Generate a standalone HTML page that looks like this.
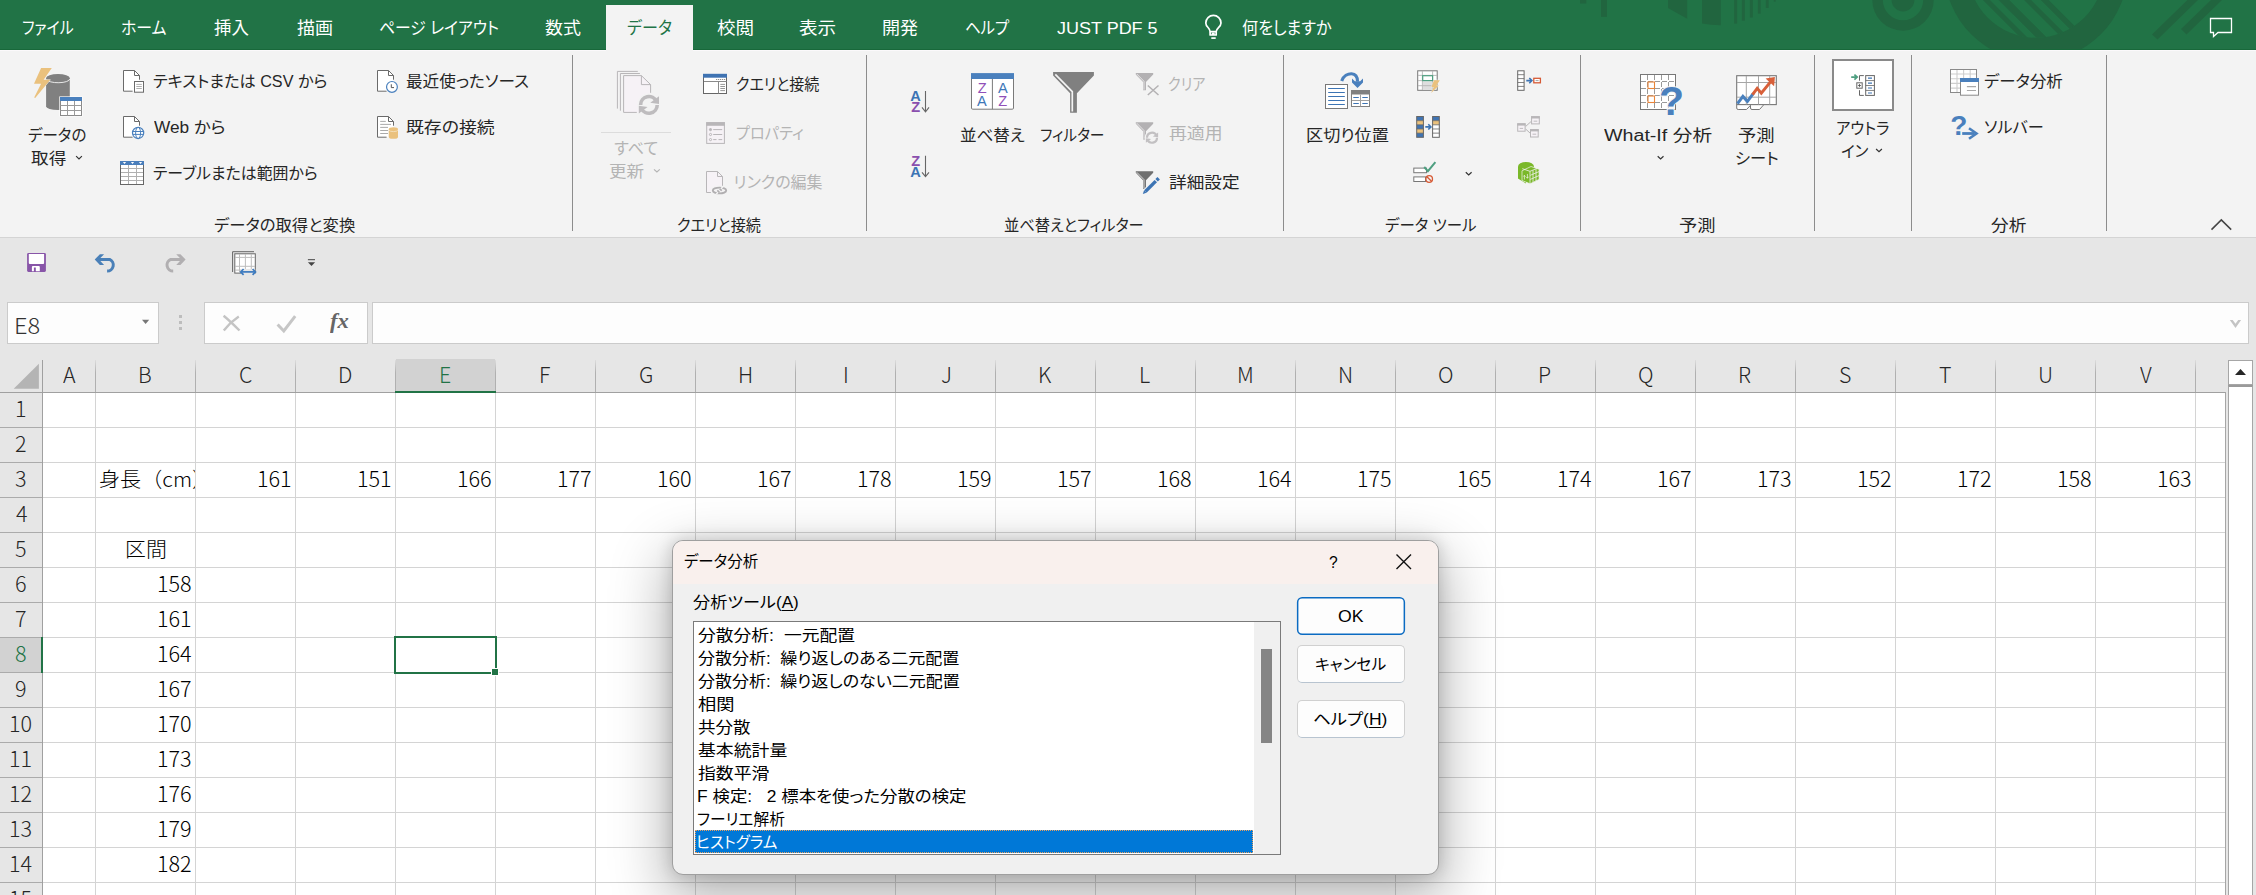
<!DOCTYPE html><html lang="ja"><head><meta charset="utf-8"><title>データ分析</title><style>

html,body{margin:0;padding:0}
body{width:2256px;height:895px;overflow:hidden;position:relative;background:#e6e6e6;font-family:"Liberation Sans","Noto Sans CJK JP",sans-serif}
.a{position:absolute}
.t{position:absolute;white-space:nowrap;line-height:30px;height:30px;transform-origin:0 50%}
.t.u{font-family:"Liberation Sans","Noto Sans CJK JP",sans-serif;font-feature-settings:"palt"}
.t.d{font-family:"Liberation Sans","Noto Sans CJK JP",sans-serif;font-feature-settings:"palt"}
.t.c{font-family:"Noto Sans CJK JP","Liberation Sans",sans-serif;font-weight:300}
.t.s{font-family:"Liberation Serif",serif;font-style:italic;font-weight:700}
.t u{text-decoration:underline;text-underline-offset:2px;text-decoration-thickness:1px}
svg{position:absolute;overflow:visible}

</style></head><body>
<div class="a" id="tabbar" style="left:0;top:0;width:2256px;height:50px;background:#217346;overflow:hidden">
<svg style="left:1560px;top:0" width="696" height="50" viewBox="1560 0 696 50"><g fill="#21653f">
<rect x="1580" y="0" width="6.300" height="3.500"/><rect x="1601" y="0" width="6" height="16.800"/>
<path d="M1668 0H1687.200V18.800L1668 8Z"/><path d="M1702 0H1720.800V25.200Q1711 25.200 1702 23.600Z"/>
<rect x="1734.200" y="0" width="2.900" height="23.600"/><rect x="1741.900" y="0" width="2.900" height="20.700"/><rect x="1749.900" y="0" width="2.900" height="17.500"/><rect x="1757.900" y="0" width="2.800" height="13.600"/><rect x="1765.800" y="0" width="2.900" height="8"/><rect x="1773.800" y="0" width="1.900" height="1.600"/>
<path fill-rule="evenodd" d="M1872.300 0a30.700 30.700 0 0 0 61.400 0ZM1882.800 0a20.200 20.200 0 0 0 40.400 0Z"/>
<path d="M1891.600 0a11.400 11.400 0 0 0 22.800 0Z"/>
<path fill-rule="evenodd" d="M1944.300 -30.500a91.700 91.700 0 0 0 183.400 0a91.700 91.700 0 0 0 -183.400 0ZM1967.800 -30.500a68.200 68.200 0 0 0 136.400 0a68.200 68.200 0 0 0 -136.400 0Z"/>
</g>
<clipPath id="cpr"><circle cx="2036" cy="-30.500" r="68.200"/></clipPath>
<g clip-path="url(#cpr)" fill="#21653f"><path d="M1982.900 0H1989.900L2049.900 60H2042.900ZM1998.700 0H2009.200L2069.200 60H2058.700ZM2024.100 0H2031.100L2091.100 60H2084.100ZM2040.800 0H2048.700L2108.700 60H2100.800Z"/></g>
<g fill="#21653f"><path d="M2187.400 0H2198L2157.500 39.500L2152 34.600ZM2211 0H2222L2186.500 34.500L2181 29Z"/></g>
<path d="M2210.500 18.500H2231.500V32.500H2218L2213.500 36.500V32.500H2210.500Z" fill="none" stroke="#fff" stroke-width="1.300"/>
</svg>
</div>
<div class="a" style="left:0px;top:50px;width:2256px;height:187px;background:#f3f3f3"></div>
<div class="a" style="left:0px;top:49px;width:2256px;height:1px;background:#18683a"></div>
<div class="a" style="left:0px;top:50px;width:2256px;height:1px;background:#fbf9fb"></div>
<div class="a" style="left:606px;top:5px;width:87px;height:46px;background:#f3f3f3"></div>
<div class="a" style="left:0px;top:237px;width:2256px;height:1px;background:#d4d4d4"></div>
<div class="a" style="left:572px;top:55px;width:1px;height:176px;background:#8c8c8c"></div>
<div class="a" style="left:866px;top:55px;width:1px;height:176px;background:#8c8c8c"></div>
<div class="a" style="left:1283px;top:55px;width:1px;height:176px;background:#8c8c8c"></div>
<div class="a" style="left:1580px;top:55px;width:1px;height:176px;background:#8c8c8c"></div>
<div class="a" style="left:1814px;top:55px;width:1px;height:176px;background:#8c8c8c"></div>
<div class="a" style="left:1911px;top:55px;width:1px;height:176px;background:#8c8c8c"></div>
<div class="a" style="left:2106px;top:55px;width:1px;height:176px;background:#8c8c8c"></div>
<div class="a" style="left:601px;top:132px;width:70px;height:1px;background:#dcdcdc"></div>
<div class="a" style="left:1832px;top:59px;width:62px;height:52px;background:#fff;border:2px solid #8a8a8a;box-sizing:border-box"></div>
<div class="a" style="left:7px;top:302px;width:152px;height:42px;background:#fdfdfd;border:1px solid #cbcbcb;box-sizing:border-box"></div>
<div class="a" style="left:204px;top:302px;width:164px;height:42px;background:#fdfdfd;border:1px solid #cbcbcb;box-sizing:border-box"></div>
<div class="a" style="left:372px;top:302px;width:1877px;height:42px;background:#fdfdfd;border:1px solid #cbcbcb;box-sizing:border-box"></div>
<div class="a" style="left:179px;top:315px;width:3px;height:3px;background:#bdbdbd"></div>
<div class="a" style="left:179px;top:321px;width:3px;height:3px;background:#bdbdbd"></div>
<div class="a" style="left:179px;top:327px;width:3px;height:3px;background:#bdbdbd"></div>
<div class="a" style="left:43px;top:393px;width:2183px;height:502px;background:#fff"></div>
<div class="a" style="left:396px;top:359px;width:99px;height:33px;background:#d2d2d2"></div>
<div class="a" style="left:0px;top:638px;width:42px;height:34px;background:#d2d2d2"></div>
<div class="a" style="left:95px;top:360px;width:1px;height:32px;background:linear-gradient(#dcdcdc,#b0b0b0 40%,#b0b0b0)"></div>
<div class="a" style="left:195px;top:360px;width:1px;height:32px;background:linear-gradient(#dcdcdc,#b0b0b0 40%,#b0b0b0)"></div>
<div class="a" style="left:295px;top:360px;width:1px;height:32px;background:linear-gradient(#dcdcdc,#b0b0b0 40%,#b0b0b0)"></div>
<div class="a" style="left:395px;top:360px;width:1px;height:32px;background:linear-gradient(#dcdcdc,#b0b0b0 40%,#b0b0b0)"></div>
<div class="a" style="left:495px;top:360px;width:1px;height:32px;background:linear-gradient(#dcdcdc,#b0b0b0 40%,#b0b0b0)"></div>
<div class="a" style="left:595px;top:360px;width:1px;height:32px;background:linear-gradient(#dcdcdc,#b0b0b0 40%,#b0b0b0)"></div>
<div class="a" style="left:695px;top:360px;width:1px;height:32px;background:linear-gradient(#dcdcdc,#b0b0b0 40%,#b0b0b0)"></div>
<div class="a" style="left:795px;top:360px;width:1px;height:32px;background:linear-gradient(#dcdcdc,#b0b0b0 40%,#b0b0b0)"></div>
<div class="a" style="left:895px;top:360px;width:1px;height:32px;background:linear-gradient(#dcdcdc,#b0b0b0 40%,#b0b0b0)"></div>
<div class="a" style="left:995px;top:360px;width:1px;height:32px;background:linear-gradient(#dcdcdc,#b0b0b0 40%,#b0b0b0)"></div>
<div class="a" style="left:1095px;top:360px;width:1px;height:32px;background:linear-gradient(#dcdcdc,#b0b0b0 40%,#b0b0b0)"></div>
<div class="a" style="left:1195px;top:360px;width:1px;height:32px;background:linear-gradient(#dcdcdc,#b0b0b0 40%,#b0b0b0)"></div>
<div class="a" style="left:1295px;top:360px;width:1px;height:32px;background:linear-gradient(#dcdcdc,#b0b0b0 40%,#b0b0b0)"></div>
<div class="a" style="left:1395px;top:360px;width:1px;height:32px;background:linear-gradient(#dcdcdc,#b0b0b0 40%,#b0b0b0)"></div>
<div class="a" style="left:1495px;top:360px;width:1px;height:32px;background:linear-gradient(#dcdcdc,#b0b0b0 40%,#b0b0b0)"></div>
<div class="a" style="left:1595px;top:360px;width:1px;height:32px;background:linear-gradient(#dcdcdc,#b0b0b0 40%,#b0b0b0)"></div>
<div class="a" style="left:1695px;top:360px;width:1px;height:32px;background:linear-gradient(#dcdcdc,#b0b0b0 40%,#b0b0b0)"></div>
<div class="a" style="left:1795px;top:360px;width:1px;height:32px;background:linear-gradient(#dcdcdc,#b0b0b0 40%,#b0b0b0)"></div>
<div class="a" style="left:1895px;top:360px;width:1px;height:32px;background:linear-gradient(#dcdcdc,#b0b0b0 40%,#b0b0b0)"></div>
<div class="a" style="left:1995px;top:360px;width:1px;height:32px;background:linear-gradient(#dcdcdc,#b0b0b0 40%,#b0b0b0)"></div>
<div class="a" style="left:2095px;top:360px;width:1px;height:32px;background:linear-gradient(#dcdcdc,#b0b0b0 40%,#b0b0b0)"></div>
<div class="a" style="left:2195px;top:360px;width:1px;height:32px;background:linear-gradient(#dcdcdc,#b0b0b0 40%,#b0b0b0)"></div>
<div class="a" style="left:95px;top:393px;width:1px;height:502px;background:#d4d4d4"></div>
<div class="a" style="left:195px;top:393px;width:1px;height:502px;background:#d4d4d4"></div>
<div class="a" style="left:295px;top:393px;width:1px;height:502px;background:#d4d4d4"></div>
<div class="a" style="left:395px;top:393px;width:1px;height:502px;background:#d4d4d4"></div>
<div class="a" style="left:495px;top:393px;width:1px;height:502px;background:#d4d4d4"></div>
<div class="a" style="left:595px;top:393px;width:1px;height:502px;background:#d4d4d4"></div>
<div class="a" style="left:695px;top:393px;width:1px;height:502px;background:#d4d4d4"></div>
<div class="a" style="left:795px;top:393px;width:1px;height:502px;background:#d4d4d4"></div>
<div class="a" style="left:895px;top:393px;width:1px;height:502px;background:#d4d4d4"></div>
<div class="a" style="left:995px;top:393px;width:1px;height:502px;background:#d4d4d4"></div>
<div class="a" style="left:1095px;top:393px;width:1px;height:502px;background:#d4d4d4"></div>
<div class="a" style="left:1195px;top:393px;width:1px;height:502px;background:#d4d4d4"></div>
<div class="a" style="left:1295px;top:393px;width:1px;height:502px;background:#d4d4d4"></div>
<div class="a" style="left:1395px;top:393px;width:1px;height:502px;background:#d4d4d4"></div>
<div class="a" style="left:1495px;top:393px;width:1px;height:502px;background:#d4d4d4"></div>
<div class="a" style="left:1595px;top:393px;width:1px;height:502px;background:#d4d4d4"></div>
<div class="a" style="left:1695px;top:393px;width:1px;height:502px;background:#d4d4d4"></div>
<div class="a" style="left:1795px;top:393px;width:1px;height:502px;background:#d4d4d4"></div>
<div class="a" style="left:1895px;top:393px;width:1px;height:502px;background:#d4d4d4"></div>
<div class="a" style="left:1995px;top:393px;width:1px;height:502px;background:#d4d4d4"></div>
<div class="a" style="left:2095px;top:393px;width:1px;height:502px;background:#d4d4d4"></div>
<div class="a" style="left:2195px;top:393px;width:1px;height:502px;background:#d4d4d4"></div>
<div class="a" style="left:43px;top:427px;width:2182px;height:1px;background:#d4d4d4"></div>
<div class="a" style="left:0px;top:427px;width:42px;height:1px;background:#ababab"></div>
<div class="a" style="left:43px;top:462px;width:2182px;height:1px;background:#d4d4d4"></div>
<div class="a" style="left:0px;top:462px;width:42px;height:1px;background:#ababab"></div>
<div class="a" style="left:43px;top:497px;width:2182px;height:1px;background:#d4d4d4"></div>
<div class="a" style="left:0px;top:497px;width:42px;height:1px;background:#ababab"></div>
<div class="a" style="left:43px;top:532px;width:2182px;height:1px;background:#d4d4d4"></div>
<div class="a" style="left:0px;top:532px;width:42px;height:1px;background:#ababab"></div>
<div class="a" style="left:43px;top:567px;width:2182px;height:1px;background:#d4d4d4"></div>
<div class="a" style="left:0px;top:567px;width:42px;height:1px;background:#ababab"></div>
<div class="a" style="left:43px;top:602px;width:2182px;height:1px;background:#d4d4d4"></div>
<div class="a" style="left:0px;top:602px;width:42px;height:1px;background:#ababab"></div>
<div class="a" style="left:43px;top:637px;width:2182px;height:1px;background:#d4d4d4"></div>
<div class="a" style="left:0px;top:637px;width:42px;height:1px;background:#ababab"></div>
<div class="a" style="left:43px;top:672px;width:2182px;height:1px;background:#d4d4d4"></div>
<div class="a" style="left:0px;top:672px;width:42px;height:1px;background:#ababab"></div>
<div class="a" style="left:43px;top:707px;width:2182px;height:1px;background:#d4d4d4"></div>
<div class="a" style="left:0px;top:707px;width:42px;height:1px;background:#ababab"></div>
<div class="a" style="left:43px;top:742px;width:2182px;height:1px;background:#d4d4d4"></div>
<div class="a" style="left:0px;top:742px;width:42px;height:1px;background:#ababab"></div>
<div class="a" style="left:43px;top:777px;width:2182px;height:1px;background:#d4d4d4"></div>
<div class="a" style="left:0px;top:777px;width:42px;height:1px;background:#ababab"></div>
<div class="a" style="left:43px;top:812px;width:2182px;height:1px;background:#d4d4d4"></div>
<div class="a" style="left:0px;top:812px;width:42px;height:1px;background:#ababab"></div>
<div class="a" style="left:43px;top:847px;width:2182px;height:1px;background:#d4d4d4"></div>
<div class="a" style="left:0px;top:847px;width:42px;height:1px;background:#ababab"></div>
<div class="a" style="left:43px;top:882px;width:2182px;height:1px;background:#d4d4d4"></div>
<div class="a" style="left:0px;top:882px;width:42px;height:1px;background:#ababab"></div>
<div class="a" style="left:0px;top:392px;width:2226px;height:1px;background:#a0a0a0"></div>
<div class="a" style="left:42px;top:360px;width:1px;height:535px;background:#a0a0a0"></div>
<div class="a" style="left:2225px;top:392px;width:1px;height:503px;background:#a6a6a6"></div>
<svg style="left:12px;top:362px" width="28" height="28" viewBox="12 362 28 28"><path d="M38.900 363.700V388.700H13.700Z" fill="#b4b4b4"/></svg>
<div class="a" style="left:395px;top:391px;width:101px;height:2px;background:#217346"></div>
<div class="a" style="left:41px;top:637px;width:2px;height:36px;background:#217346"></div>
<div class="a" style="left:394px;top:636px;width:103px;height:38px;border:2px solid #217346;box-sizing:border-box"></div>
<div class="a" style="left:491px;top:668px;width:8px;height:8px;background:#fff"></div>
<div class="a" style="left:492px;top:669px;width:6px;height:6px;background:#217346"></div>
<div class="a" style="left:2228px;top:360px;width:25px;height:25px;background:#fff;border:1px solid #a6a6a6;box-sizing:border-box"></div>
<div class="a" style="left:2228px;top:385px;width:25px;height:520px;background:#fff;border:1px solid #a6a6a6;border-top:2px solid #9a9a9a;box-sizing:border-box"></div>
<svg style="left:2234px;top:368px" width="14" height="8" viewBox="0 0 14 8"><path d="M1 7L6.500 1L12 7Z" fill="#262626"/></svg>
<div class="a" id="dlg" style="left:672px;top:540px;width:767px;height:335px;box-sizing:border-box;border:1px solid #9f9f9f;border-radius:11px;background:#f0f0f0;overflow:hidden;box-shadow:0 20px 56px 6px rgba(0,0,0,.29),0 0 16px 1px rgba(0,0,0,.15)">
<div class="a" style="left:0;top:0;width:767px;height:43px;background:#f9f0ed"></div>
</div>
<div class="a" style="left:693px;top:621px;width:588px;height:234px;background:#fff;border:1px solid #7a7a7a;box-sizing:border-box"></div>
<div class="a" style="left:1254px;top:622px;width:26px;height:232px;background:#f0f0f0"></div>
<div class="a" style="left:1261px;top:649px;width:11px;height:94px;background:#858585"></div>
<div class="a" style="left:695px;top:830px;width:558px;height:23px;background:#0078d7;outline:1px dotted #e8a060;outline-offset:-1px"></div>
<svg style="left:1295px;top:595px" width="112" height="42" viewBox="1295 595 112 42"><rect x="1297.650" y="597.650" width="106.700" height="36.700" rx="4.500" fill="#fdfdfd" stroke="#0b6bc2" stroke-width="1.500"/></svg>
<div class="a" style="left:1297px;top:645px;width:108px;height:38px;background:#fdfdfd;border:1px solid #d0d0d0;border-bottom-color:#b8c4d0;border-radius:5px;box-sizing:border-box"></div>
<div class="a" style="left:1297px;top:700px;width:108px;height:38px;background:#fdfdfd;border:1px solid #d0d0d0;border-bottom-color:#b8c4d0;border-radius:5px;box-sizing:border-box"></div>
<svg style="left:1396px;top:554px" width="16" height="16" viewBox="0 0 16 16"><path d="M0.500 0.500L15 15M15 0.500L0.500 15" stroke="#111" stroke-width="1.400" fill="none"/></svg>
<svg style="left:1200px;top:12px" width="28" height="30" viewBox="1200 12 28 30"><g fill="none" stroke="#fff" stroke-width="1.7" stroke-linejoin="round">
<path d="M1210.1 31.6C1210.1 28 1205.8 27 1205.8 22.9A7.6 7.6 0 0 1 1221 22.9C1221 27 1216.200 28 1216.200 31.600Z"/>
<path d="M1210.1 31.6V35H1216.200V31.6M1211.700 33.300H1214.700"/><path d="M1211.300 38.100H1215.700"/></g></svg>
<svg style="left:30px;top:64px" width="58" height="56" viewBox="30 64 58 56"><path d="M46.1 78V106.200A11.850 3.900 0 0 0 69.800 106.200V78Z" fill="#808080"/>
<ellipse cx="57.950" cy="78" rx="11.850" ry="3.900" fill="#808080"/>
<path d="M46.600 79.500A11.600 3.700 0 0 0 69.700 79" fill="none" stroke="#f3f3f3" stroke-width=".9"/>
<polygon points="41.100,68 51.800,68 43.600,79.800 50.300,79.800 35.200,97.900 34.200,97.500 41.100,83.800 34,83.800" fill="#eac17d" stroke="#f3f3f3" stroke-width=".8" paint-order="stroke"/>
<rect x="59.300" y="96.400" width="23.400" height="20.100" fill="#fdfdfd"/>
<rect x="60.500" y="97.500" width="21" height="18" fill="#fff" stroke="#8a8a8a" stroke-width="1"/>
<rect x="60" y="97" width="22" height="4" fill="#4a80bd"/>
<path d="M67.500 101V115.500M74.500 101V115.500M60.500 105.500H81.500M60.500 110.500H81.500" stroke="#9a9a9a" stroke-width="1" fill="none"/></svg>
<svg style="left:120px;top:66px" width="28" height="30" viewBox="120 66 28 30"><g transform="translate(0 0)" fill="#fff" stroke="#6a6a6a" stroke-width="1"><path d="M123.500 70.500H134.500L139.500 75.500V91.200H123.500Z" stroke="none"/><path d="M132.600 91.200H123.500V70.500H134.500L139.500 75.500V79.700" fill="none"/><path d="M134.500 70.500V75.500H139.500" fill="none"/></g><rect x="134.500" y="81.500" width="9" height="10.700" fill="#fff" stroke="#6a6a6a"/>
<path d="M136.300 84.400H141.800M136.300 86.500H141.800M136.300 88.500H141.800" stroke="#a6a6a6" stroke-width=".9"/></svg>
<svg style="left:120px;top:112px" width="28" height="30" viewBox="120 112 28 30"><g transform="translate(0 46)" fill="#fff" stroke="#6a6a6a" stroke-width="1"><path d="M123.500 70.500H134.500L139.500 75.500V91.200H123.500Z" stroke="none"/><path d="M132.600 91.200H123.500V70.500H134.500L139.500 75.500V79.700" fill="none"/><path d="M134.500 70.500V75.500H139.500" fill="none"/></g><circle cx="138.100" cy="132.950" r="5.600" fill="#fff" stroke="#4a80bd" stroke-width="1.200"/>
<ellipse cx="138.100" cy="132.950" rx="2.500" ry="5.600" fill="none" stroke="#4a80bd" stroke-width="1"/>
<path d="M132.900 131.500H143.300M132.900 134.400H143.300" stroke="#4a80bd" stroke-width="1" fill="none"/></svg>
<svg style="left:118px;top:159px" width="28" height="28" viewBox="118 159 28 28"><rect x="120.500" y="161.500" width="23" height="23" fill="#fff" stroke="#666" stroke-width="1"/>
<path d="M128.500 165V184M136.500 165V184M121 168.500H143M121 172.500H143M121 176.500H143M121 180.500H143" stroke="#b0b0b0" stroke-width="1" fill="none"/>
<rect x="120" y="161" width="24" height="4" fill="#4a7ebb"/>
<path d="M122.900 162.100H126.100L124.500 164.100ZM130.900 162.100H134.100L132.500 164.100ZM138.900 162.100H142.100L140.500 164.100Z" fill="#fff"/></svg>
<svg style="left:374px;top:66px" width="28" height="30" viewBox="374 66 28 30"><g transform="translate(254 0)" fill="#fff" stroke="#6a6a6a" stroke-width="1"><path d="M123.500 70.500H134.500L139.500 75.500V91.200H123.500Z" stroke="none"/><path d="M132.600 91.200H123.500V70.500H134.500L139.500 75.500V79.700" fill="none"/><path d="M134.500 70.500V75.500H139.500" fill="none"/></g><circle cx="391.950" cy="86.900" r="5.400" fill="#fff" stroke="#4a80bd" stroke-width="1.200"/>
<path d="M391.300 84.300V87.600H394" fill="none" stroke="#555" stroke-width="1"/></svg>
<svg style="left:374px;top:112px" width="28" height="30" viewBox="374 112 28 30"><g transform="translate(254 46)" fill="#fff" stroke="#6a6a6a" stroke-width="1"><path d="M123.500 70.500H134.500L139.500 75.500V91.200H123.500Z" stroke="none"/><path d="M132.600 91.200H123.500V70.500H134.500L139.500 75.500V79.700" fill="none"/><path d="M134.500 70.500V75.500H139.500" fill="none"/></g><path d="M380.200 121.400H385.800M380.200 124.400H391M380.200 127.400H388M380.200 130.500H388M380.200 133.500H388" stroke="#a0a0a0" stroke-width=".9" fill="none"/>
<path d="M388.800 129.200V136.900A4.600 1.900 0 0 0 398 136.900V129.200Z" fill="#eac17d" stroke="#f3f3f3" stroke-width=".8" paint-order="stroke"/>
<ellipse cx="393.400" cy="129.200" rx="4.600" ry="1.900" fill="#eac17d"/>
<path d="M389 130.100A4.500 1.800 0 0 0 397.900 130" fill="none" stroke="#f6e6c8" stroke-width=".8"/></svg>
<svg style="left:612px;top:66px" width="54" height="54" viewBox="612 66 54 54"><g fill="none" stroke="#b8b6b8" stroke-width="1">
<path d="M617.400 108.600V71.400H637.800"/><path d="M620.400 110.700V73.500H639.900"/></g>
<path d="M623.600 75.600H641.400L650.600 84.600V112.400H623.600Z" fill="#f6f2f6"/>
<path d="M636.800 112.400H623.600V75.600H641.400L650.600 84.600V92.800M641.400 75.600V84.600H650.600" fill="none" stroke="#b8b6b8" stroke-width="1"/>
<circle cx="648.900" cy="104.900" r="11.500" fill="#f3f3f3"/><g fill="none" stroke="#bebcbe" stroke-width="3.6"><path d="M640.6 104.9A8.3 8.3 0 0 1 656.42 101.39"/><path d="M657.2 104.9A8.3 8.3 0 0 1 641.38 108.41"/></g><path d="M659 96.35L659 104.07L650.25 102.78Z" fill="#bebcbe"/><path d="M638.8 113.45L638.8 105.73L647.55 107.02Z" fill="#bebcbe"/></svg>
<svg style="left:700px;top:70px" width="30" height="28" viewBox="700 70 30 28"><rect x="703.500" y="74.500" width="23" height="19" fill="#fff" stroke="#666" stroke-width="1"/>
<rect x="703" y="73.800" width="24" height="3.900" fill="#3f73b2"/>
<path d="M704 81.500H726.500M718.500 81.500V93.500" stroke="#8a8a8a" stroke-width="1" fill="none"/>
<path d="M716.200 79.500H725.200" stroke="#777" stroke-width="1" stroke-dasharray="1 1" fill="none"/>
<path d="M720.300 84.400H725M720.300 86.500H725M720.300 88.500H725M720.300 90.600H725" stroke="#8a8a8a" stroke-width=".9" fill="none"/></svg>
<svg style="left:702px;top:118px" width="28" height="30" viewBox="702 118 28 30"><rect x="706.700" y="122.700" width="17.700" height="20.700" fill="#f6f2f6" stroke="#b8b6b8" stroke-width="1"/>
<rect x="706.200" y="122.200" width="18.700" height="3.600" fill="#b8b6b8"/>
<g fill="none" stroke="#b8b6b8" stroke-width="1"><circle cx="710.500" cy="129.600" r="1.100" fill="#b8b6b8"/><circle cx="710.500" cy="134.500" r="1.100"/><circle cx="710.500" cy="139.600" r="1.100"/>
<path d="M713.200 129.600H722.200M713.200 134.500H722.200M713.200 139.600H716.500M718.500 139.600H722.200"/></g></svg>
<svg style="left:702px;top:167px" width="30" height="30" viewBox="702 167 30 30"><path d="M706.500 171.500H717.500L722.500 176.500V192.500H706.500Z" fill="#f6f2f6"/>
<path d="M710.900 192.500H706.500V171.500H717.500L722.500 176.500V185.800M717.500 171.500V176.500H722.500" fill="none" stroke="#b8b6b8" stroke-width="1"/>
<ellipse cx="719.500" cy="190.500" rx="6.700" ry="2.900" fill="none" stroke="#f3f3f3" stroke-width="3.800"/>
<ellipse cx="719.500" cy="190.500" rx="6.700" ry="2.900" fill="none" stroke="#b0aeb0" stroke-width="1.900"/>
<path d="M716.200 194.300L722.800 186.700" stroke="#f3f3f3" stroke-width="1.500" fill="none"/>
<path d="M717.300 190.400L719.500 192.500M719.700 188.800L721.800 190.700" stroke="#b0aeb0" stroke-width="1.700" fill="none"/></svg>
<svg style="left:906px;top:86px" width="28" height="30" viewBox="906 86 28 30"><g font-family="Liberation Sans,sans-serif" font-weight="700" font-size="14.600px" text-anchor="middle"><text x="915.600" y="100.7" fill="#3c74b4">A</text><text x="915.600" y="111.9" fill="#8a4fae">Z</text></g><path d="M925.500 90.9V111.6M922 107.4L925.500 111.8L929 107.4" fill="none" stroke="#666" stroke-width="1.100"/></svg>
<svg style="left:906px;top:151px" width="28" height="30" viewBox="906 151 28 30"><g font-family="Liberation Sans,sans-serif" font-weight="700" font-size="14.600px" text-anchor="middle"><text x="915.600" y="165.6" fill="#8a4fae">Z</text><text x="915.600" y="176.8" fill="#3c74b4">A</text></g><path d="M925.500 155.8V176.5M922 172.3L925.500 176.7L929 172.3" fill="none" stroke="#666" stroke-width="1.100"/></svg>
<svg style="left:968px;top:70px" width="50" height="44" viewBox="968 70 50 44"><path d="M971.500 76V108A1.200 1.200 0 0 0 972.700 109.200H1012.300A1.200 1.200 0 0 0 1013.500 108V76Z" fill="#fff" stroke="#7a7a7a" stroke-width="1"/>
<rect x="971" y="73.100" width="43" height="5.900" fill="#4a80bd"/>
<path d="M992.400 79V109.200" stroke="#7a7a7a" stroke-width="1"/>
<g font-family="Liberation Sans,sans-serif" font-size="14.600px" text-anchor="middle">
<text x="982.100" y="92.700" fill="#9050b8">Z</text><text x="981.900" y="105.800" fill="#3f78b8">A</text>
<text x="1002.800" y="92.700" fill="#3f78b8">A</text><text x="1002.700" y="105.800" fill="#9050b8">Z</text></g></svg>
<svg style="left:1050px;top:69px" width="48" height="48" viewBox="1050 69 48 48"><path d="M1053.1 72.1H1093.9V75.6L1076.9 93.2V112.8H1070.1V93.2L1053.1 75.6Z" fill="#808080"/><path d="M1055.3 74.3L1072.3 91.6V111.4" fill="none" stroke="#f3f3f3" stroke-width="1.68"/></svg>
<svg style="left:1132px;top:70px" width="30" height="28" viewBox="1132 70 30 28"><path d="M1135.8 73H1153.2V74.49L1145.95 82V90.36H1143.05V82L1135.8 74.49Z" fill="#b3b1b3"/><path d="M1136.74 73.94L1143.99 81.32V89.76" fill="none" stroke="#f3f3f3" stroke-width="0.8"/><path d="M1147.800 85.500L1158.500 95M1158.500 85.500L1147.800 95" stroke="#b3b1b3" stroke-width="1.500" fill="none"/></svg>
<svg style="left:1132px;top:119px" width="30" height="28" viewBox="1132 119 30 28"><path d="M1135.8 122.2H1153.2V123.69L1145.95 131.2V139.56H1143.05V131.2L1135.8 123.69Z" fill="#b3b1b3"/><path d="M1136.74 123.14L1143.99 130.52V138.96" fill="none" stroke="#f3f3f3" stroke-width="0.8"/><circle cx="1152" cy="137.700" r="7.300" fill="#f3f3f3"/><g fill="none" stroke="#c2c0c2" stroke-width="2.2"><path d="M1147 137.7A5 5 0 0 1 1156.53 135.59"/><path d="M1157 137.7A5 5 0 0 1 1147.47 139.81"/></g><path d="M1158.1 132.55L1158.1 137.2L1152.83 136.42Z" fill="#c2c0c2"/><path d="M1145.9 142.85L1145.9 138.2L1151.17 138.97Z" fill="#c2c0c2"/></svg>
<svg style="left:1132px;top:168px" width="30" height="28" viewBox="1132 168 30 28"><path d="M1135.8 171.3H1153.2V172.79L1145.95 180.3V188.66H1143.05V180.3L1135.8 172.79Z" fill="#6f6f6f"/><path d="M1136.74 172.24L1143.99 179.62V188.06" fill="none" stroke="#f3f3f3" stroke-width="0.8"/><path d="M1158.600 178.300L1144.600 192.200" stroke="#f3f3f3" stroke-width="5.500" fill="none"/><path d="M1158.700 178.200L1156.600 180.300" stroke="#3c74b4" stroke-width="3.400" fill="none"/><path d="M1155.800 181.100L1145.400 191.500" stroke="#3c74b4" stroke-width="3.400" fill="none"/><path d="M1144.100 190.300L1146.500 192.700L1142.800 193.900Z" fill="#3c74b4"/></svg>
<svg style="left:1322px;top:68px" width="52" height="44" viewBox="1322 68 52 44"><rect x="1325.500" y="84.500" width="22" height="24" fill="#fff" stroke="#777" stroke-width="1"/>
<path d="M1328.200 88.500H1344.800M1328.200 92.500H1344.800M1328.200 96.500H1344.800M1328.200 100.500H1344.800M1328.200 104.500H1344.800" stroke="#3c74b4" stroke-width="1" fill="none"/>
<rect x="1351.500" y="90.500" width="18" height="16" fill="#fff" stroke="#808080" stroke-width="1"/>
<rect x="1351" y="90" width="19" height="4.500" fill="#808080"/>
<path d="M1360.500 94.500V106.400M1352 100.500H1369.400" stroke="#a0a0a0" stroke-width="1" fill="none"/>
<path d="M1353.300 97.500H1358.800M1362.300 97.500H1367.800M1353.300 103.500H1358.800M1362.300 103.500H1367.800" stroke="#3c74b4" stroke-width="1.100" fill="none"/>
<path d="M1341.700 80.900C1343.500 75.800 1348 73.600 1351.500 73.700C1355.500 73.900 1357.500 77 1357.500 81.500" fill="none" stroke="#4a80bd" stroke-width="3.100"/>
<path d="M1352 78.600L1354.800 81.200H1360.200L1363 78.600V82.600L1357.500 88.100L1352 82.600Z" fill="#4a80bd"/></svg>
<svg style="left:1414px;top:67px" width="30" height="28" viewBox="1414 67 30 28"><rect x="1417.700" y="70.800" width="19.500" height="19.500" fill="#fff" stroke="#777" stroke-width="1"/>
<rect x="1422.900" y="81.500" width="9.700" height="8.300" fill="#dedede"/>
<path d="M1422.400 71V90M1432.600 71V90M1418 75.400H1437M1418 80.600H1437M1418 85.700H1437" stroke="#b5b5b5" stroke-width=".9" fill="none"/>
<rect x="1422.700" y="75.700" width="9.900" height="4.900" fill="#fff" stroke="#4e9f80" stroke-width="1.200"/>
<path d="M1434 80.200H1439.800L1436.400 85.500H1438.800L1431.200 92.900L1433.600 87H1431.400Z" fill="#eac17d" stroke="#f3f3f3" stroke-width=".7" paint-order="stroke"/></svg>
<svg style="left:1412px;top:112px" width="32" height="30" viewBox="1412 112 32 30"><rect x="1416.7" y="116.5" width="6.7" height="4.16" fill="#3f73b2"/><rect x="1416.7" y="120.66" width="6.7" height="4.16" fill="#eac17d"/><rect x="1416.7" y="124.82" width="6.7" height="4.16" fill="#3f73b2"/><rect x="1416.7" y="128.98" width="6.7" height="4.16" fill="#eac17d"/><rect x="1416.7" y="133.14" width="6.7" height="4.16" fill="#3f73b2"/><rect x="1416.7" y="116.5" width="6.7" height="20.8" fill="none" stroke="#666" stroke-width="1"/><path d="M1416.7 120.66H1423.4" stroke="#666" stroke-width=".8"/><path d="M1416.7 124.82H1423.4" stroke="#666" stroke-width=".8"/><path d="M1416.7 128.98H1423.4" stroke="#666" stroke-width=".8"/><path d="M1416.7 133.14H1423.4" stroke="#666" stroke-width=".8"/><rect x="1432.6" y="116.5" width="6.7" height="4.16" fill="#3f73b2"/><rect x="1432.6" y="120.66" width="6.7" height="4.16" fill="#eac17d"/><rect x="1432.6" y="124.82" width="6.7" height="4.16" fill="#fff"/><rect x="1432.6" y="128.98" width="6.7" height="4.16" fill="#fff"/><rect x="1432.6" y="133.14" width="6.7" height="4.16" fill="#fff"/><rect x="1432.6" y="116.5" width="6.7" height="20.8" fill="none" stroke="#666" stroke-width="1"/><path d="M1432.6 120.66H1439.3" stroke="#666" stroke-width=".8"/><path d="M1432.6 124.82H1439.3" stroke="#666" stroke-width=".8"/><path d="M1432.6 128.98H1439.3" stroke="#666" stroke-width=".8"/><path d="M1432.6 133.14H1439.3" stroke="#666" stroke-width=".8"/><path d="M1425.3 126.9H1430.5M1428.3 124.3L1430.9 126.9L1428.3 129.5" fill="none" stroke="#3c74b4" stroke-width="1.6"/></svg>
<svg style="left:1410px;top:158px" width="30" height="28" viewBox="1410 158 30 28"><rect x="1413.800" y="168.100" width="12.700" height="4.600" fill="#fff" stroke="#777" stroke-width="1"/>
<rect x="1413.800" y="176.900" width="11.700" height="4.600" fill="#fff" stroke="#777" stroke-width="1"/>
<path d="M1424.200 167L1427.900 171.200L1435.400 162.100" fill="none" stroke="#4e9f80" stroke-width="2"/>
<circle cx="1429.200" cy="179" r="3.300" fill="#f3f3f3" stroke="#d65a35" stroke-width="1.300"/><path d="M1426.900 176.700L1431.500 181.300" stroke="#d65a35" stroke-width="1.300"/></svg>
<svg style="left:1514px;top:67px" width="30" height="28" viewBox="1514 67 30 28"><rect x="1517.7" y="70.8" width="6.4" height="3.9" fill="#fff"/><rect x="1517.7" y="74.7" width="6.4" height="3.9" fill="#fff"/><rect x="1517.7" y="78.6" width="6.4" height="3.9" fill="#fff"/><rect x="1517.7" y="82.5" width="6.4" height="3.9" fill="#fff"/><rect x="1517.7" y="86.4" width="6.4" height="3.9" fill="#fff"/><rect x="1517.7" y="70.8" width="6.4" height="19.5" fill="none" stroke="#666" stroke-width="1"/><path d="M1517.7 74.7H1524.1" stroke="#666" stroke-width=".8"/><path d="M1517.7 78.6H1524.1" stroke="#666" stroke-width=".8"/><path d="M1517.7 82.5H1524.1" stroke="#666" stroke-width=".8"/><path d="M1517.7 86.4H1524.1" stroke="#666" stroke-width=".8"/><path d="M1526.3 80.6H1531.5M1529.3 78L1531.9 80.6L1529.3 83.2" fill="none" stroke="#3c74b4" stroke-width="1.6"/><rect x="1533.800" y="78.300" width="6.600" height="4.500" fill="#fff" stroke="#d65a35" stroke-width="1.300"/><path d="M1535.600 80.600H1538.600" stroke="#999" stroke-width=".9"/></svg>
<svg style="left:1514px;top:113px" width="30" height="28" viewBox="1514 113 30 28"><path d="M1525.600 126.500L1531.100 121.500M1525.600 129L1530 133" stroke="#b8b6b8" stroke-width="1" fill="none"/><rect x="1517.7" y="123.8" width="7.4" height="7.4" fill="#f6f2f6" stroke="#b8b6b8" stroke-width="1"/><rect x="1517.2" y="123.3" width="8.4" height="2.300" fill="#b8b6b8"/><path d="M1519.7 128.39H1523.1" stroke="#b8b6b8" stroke-width=".9"/><rect x="1531.6" y="116.7" width="7.7" height="7.2" fill="#f6f2f6" stroke="#b8b6b8" stroke-width="1"/><rect x="1531.1" y="116.2" width="8.7" height="2.300" fill="#b8b6b8"/><path d="M1533.6 121.16H1537.3" stroke="#b8b6b8" stroke-width=".9"/><rect x="1530.5" y="129.6" width="7.7" height="7.4" fill="#f6f2f6" stroke="#b8b6b8" stroke-width="1"/><rect x="1530" y="129.1" width="8.7" height="2.300" fill="#b8b6b8"/><path d="M1532.5 134.19H1536.2" stroke="#b8b6b8" stroke-width=".9"/></svg>
<svg style="left:1514px;top:158px" width="30" height="30" viewBox="1514 158 30 30"><path d="M1518 166.500A8 4.600 0 0 1 1534 166.500V171L1518 178.500Z" fill="#7ab829"/>
<path d="M1518 167V178.500L1526 183.600V171Z" fill="#7ab829"/>
<path d="M1522 170.800L1531 166.500L1539.100 169.300V179.400L1530 183.800L1522 180.500Z" fill="#7ab829" stroke="#f3f3f3" stroke-width=".7"/>
<path d="M1530 171.300V183.500M1530 171.300L1522.300 168.700M1530 171.300L1539 167.600" stroke="#f3f3f3" stroke-width=".8" fill="none"/>
<path d="M1533 170.300V182.300M1536 169.200V181M1530.300 175.300L1539 171.600M1530.300 179.400L1539 175.600" stroke="#f3f3f3" stroke-width=".8" fill="none"/>
<path d="M1524.400 175.500V179.500M1527.400 174V178M1523.400 176.500L1524.400 175.300L1525.400 176.800M1526.400 177L1527.400 178.300L1528.400 176.800" stroke="#f3f3f3" stroke-width=".7" fill="none"/></svg>
<svg style="left:1636px;top:70px" width="50" height="48" viewBox="1636 70 50 48"><rect x="1640.500" y="74.500" width="35" height="35" fill="#fff" stroke="#777" stroke-width="1"/>
<path d="M1647.500 75V109M1654.500 75V109M1661.500 75V109M1668.500 75V109M1641 81.500H1675.500M1641 88.500H1675.500M1641 95.500H1675.500M1641 102.500H1675.500" stroke="#9a9a9a" stroke-width="1" fill="none" stroke-dasharray="5 2"/>
<rect x="1648" y="82" width="6.500" height="6.500" fill="#fff" stroke="#e8853a" stroke-width="1.100"/>
<rect x="1648" y="96" width="6.500" height="6.500" fill="#fff" stroke="#e8853a" stroke-width="1.100"/>
<text x="1671.500" y="114.800" font-family="Liberation Sans,sans-serif" font-weight="700" font-size="41px" text-anchor="middle" fill="#4a80bd" stroke="#f3f3f3" stroke-width="2" paint-order="stroke">?</text></svg>
<svg style="left:1733px;top:72px" width="48" height="40" viewBox="1733 72 48 40"><path d="M1736.700 104.700V108A1.500 1.500 0 0 0 1738.200 109.500H1746.500L1750.500 105.300V108A1.500 1.500 0 0 0 1752 109.500H1759.500L1763.800 104.700" fill="#fff" stroke="#777" stroke-width="1"/>
<rect x="1736.700" y="75.700" width="39.600" height="28.900" fill="#fff" stroke="#777" stroke-width="1.100"/>
<path d="M1746.300 76V104.500M1758.500 76V104.500M1769.700 76V104.500M1737 82.500H1776M1737 97.200H1776" stroke="#a6a6a6" stroke-width="1" fill="none"/>
<path d="M1737.500 103.600L1742.900 96.400L1747.400 101.300L1753.400 93.400" fill="none" stroke="#4a80bd" stroke-width="3"/>
<path d="M1752.500 94.600L1757.200 88.300L1761.300 93.100L1771.500 80.600" fill="none" stroke="#d8603a" stroke-width="3"/>
<path d="M1765.600 78.400L1774.900 76.900L1774.100 86.300Z" fill="#d8603a"/></svg>
<svg style="left:1848px;top:72px" width="30" height="26" viewBox="1848 72 30 26"><rect x="1865.7" y="75.6" width="8.7" height="4.95" fill="#fff"/><rect x="1865.7" y="80.55" width="8.7" height="4.95" fill="#fff"/><rect x="1865.7" y="85.5" width="8.7" height="4.95" fill="#fff"/><rect x="1865.7" y="90.45" width="8.7" height="4.95" fill="#fff"/><rect x="1865.7" y="75.6" width="8.7" height="19.8" fill="none" stroke="#666" stroke-width="1"/><path d="M1865.7 80.55H1874.4" stroke="#666" stroke-width=".8"/><path d="M1865.7 85.5H1874.4" stroke="#666" stroke-width=".8"/><path d="M1865.7 90.45H1874.4" stroke="#666" stroke-width=".8"/><path d="M1868 78.100H1872M1868 83.100H1872M1868 88H1872M1868 93H1872" stroke="#3c74b4" stroke-width="1.100" fill="none"/>
<path d="M1863.800 75.600H1859.500V80.700M1859.500 90.200V95.400H1863.800" fill="none" stroke="#666" stroke-width="1"/>
<rect x="1856.800" y="82.800" width="5.400" height="5.400" fill="#fff" stroke="#666" stroke-width="1"/><path d="M1858.200 85.500H1860.800M1859.500 84.200V86.800" stroke="#555" stroke-width="1"/>
<path d="M1851.200 77.100H1856.600M1854.400 74.600L1857.200 77.100L1854.400 79.600" fill="none" stroke="#4e9f80" stroke-width="1.700"/></svg>
<svg style="left:1947px;top:66px" width="36" height="32" viewBox="1947 66 36 32"><rect x="1950.500" y="69.500" width="26" height="23" fill="#fff" stroke="#8a8a8a" stroke-width="1"/>
<path d="M1957 70V92M1963.600 70V92M1970.200 70V92M1951 74H1976M1951 78.700H1976M1951 83.400H1976M1951 88.100H1976" stroke="#cfcfcf" stroke-width="1.100" fill="none"/>
<rect x="1960.500" y="78.500" width="18" height="16.700" fill="#fff" stroke="#8a8a8a" stroke-width="1"/>
<rect x="1960" y="78" width="19" height="4" fill="#4a80bd"/>
<path d="M1966.900 86.600H1976M1966.900 90.500H1976" stroke="#a8a8a8" stroke-width="1.100" fill="none"/></svg>
<svg style="left:1947px;top:110px" width="36" height="32" viewBox="1947 110 36 32"><text x="1958.700" y="134.500" font-family="Liberation Sans,sans-serif" font-weight="700" font-size="28px" text-anchor="middle" fill="#4a80bd">?</text>
<path d="M1962.200 133.500H1974" stroke="#4a80bd" stroke-width="2.800" fill="none"/><path d="M1969 128.300L1976.500 133.500L1969 138.800" fill="none" stroke="#4a80bd" stroke-width="2.600" stroke-linejoin="miter"/></svg>
<svg style="left:74px;top:152px" width="12" height="10" viewBox="74 152 12 10"><path d="M76.1 156.15L79 158.85L81.9 156.15" fill="none" stroke="#333" stroke-width="1.200"/></svg>
<svg style="left:651px;top:166px" width="12" height="10" viewBox="651 166 12 10"><path d="M654 169.35L656.9 172.05L659.8 169.35" fill="none" stroke="#b4b4b4" stroke-width="1.200"/></svg>
<svg style="left:1463px;top:169px" width="12" height="10" viewBox="1463 169 12 10"><path d="M1465.8 172.25L1468.7 174.95L1471.6 172.25" fill="none" stroke="#333" stroke-width="1.200"/></svg>
<svg style="left:1655px;top:153px" width="12" height="10" viewBox="1655 153 12 10"><path d="M1657.7 156.25L1660.6 158.95L1663.5 156.25" fill="none" stroke="#333" stroke-width="1.200"/></svg>
<svg style="left:1873px;top:146px" width="12" height="10" viewBox="1873 146 12 10"><path d="M1876.1 148.95L1879 151.65L1881.9 148.95" fill="none" stroke="#333" stroke-width="1.200"/></svg>
<svg style="left:2208px;top:216px" width="28" height="18" viewBox="2208 216 28 18"><path d="M2211.500 229.600L2221.300 219.900L2231.200 229.600" fill="none" stroke="#444" stroke-width="1.500"/></svg>
<svg style="left:24px;top:250px" width="26" height="26" viewBox="24 250 26 26"><rect x="27.100" y="252.900" width="18.800" height="19" rx="1.300" fill="#8855a8"/>
<path d="M28.800 253.900H44.100V262.900A1 1 0 0 1 43.100 263.900H29.800A1 1 0 0 1 28.800 262.900Z" fill="#fff"/>
<path d="M31.900 271.200V267.100A1 1 0 0 1 32.900 266.100H38.800A1 1 0 0 1 39.800 267.100V271.200H35.800V267.400H33.900V271.200Z" fill="#fff"/></svg>
<svg style="left:92px;top:250px" width="28" height="26" viewBox="92 250 28 26"><g><path d="M94.700 259.400L99.900 254.200H104.100L98.900 259.400L104.100 264.900H99.900Z" fill="#4a80b8"/>
<path d="M98 259.400H109.600A6.100 6.100 0 0 1 107.100 271.100" fill="none" stroke="#4a80b8" stroke-width="3"/></g></svg>
<svg style="left:161px;top:250px" width="28" height="26" viewBox="161 250 28 26"><g transform="translate(280.3 0) scale(-1 1)"><path d="M94.700 259.400L99.900 254.200H104.100L98.900 259.400L104.100 264.900H99.900Z" fill="#b1afb1"/>
<path d="M98 259.400H109.600A6.100 6.100 0 0 1 107.100 271.100" fill="none" stroke="#b1afb1" stroke-width="3"/></g></svg>
<svg style="left:229px;top:248px" width="30" height="30" viewBox="229 248 30 30"><path d="M232.600 272V251.700H254" fill="none" stroke="#666" stroke-width="1"/>
<rect x="234.800" y="253.800" width="20.500" height="19.300" fill="#fff" stroke="#666" stroke-width="1"/>
<path d="M239.500 254V273M245.400 254V273M251.300 254V273M235 257.400H255M235 266.300H255M235 270.100H255" stroke="#bdbdbd" stroke-width="1" fill="none"/>
<path d="M241 271.900H255.200" stroke="#e6e6e6" stroke-width="6" fill="none"/>
<path d="M241.500 271.900H254.700" stroke="#3c7abf" stroke-width="1.700" fill="none"/><path d="M243.600 269L240.700 271.900L243.600 274.800M252.600 269L255.500 271.900L252.600 274.800" fill="none" stroke="#3c7abf" stroke-width="1.700"/></svg>
<svg style="left:305px;top:256px" width="14" height="12" viewBox="305 256 14 12"><path d="M307.900 259.700H315" stroke="#444" stroke-width="1"/><path d="M307.900 262.200H315.100L311.500 266Z" fill="#444"/></svg>
<svg style="left:140px;top:317px" width="12" height="10" viewBox="140 317 12 10"><path d="M142 319.800H149.200L145.600 323.900Z" fill="#777"/></svg>
<svg style="left:220px;top:312px" width="24" height="22" viewBox="220 312 24 22"><path d="M223.600 315.700C229 320 234 325 239.500 330.500M238.800 316.500C232 321 228 325 223.800 330.400" fill="none" stroke="#c4c4c4" stroke-width="2.400"/></svg>
<svg style="left:274px;top:312px" width="24" height="22" viewBox="274 312 24 22"><path d="M277.600 324.500L283.800 331L295.200 316.200" fill="none" stroke="#c6c6c6" stroke-width="3"/></svg>
<svg style="left:2227px;top:317px" width="16" height="14" viewBox="2227 317 16 14"><path d="M2229.800 320.100H2232.700L2235.500 323.800L2238.200 320.100H2241.100L2235.500 328Z" fill="#c4c4c4"/></svg>
<span class="t u" style="left:22.12px;top:13.60px;font-size:17px;color:#ffffff;transform:scaleX(0.8772);">ファイル</span>
<span class="t u" style="left:121.06px;top:13.60px;font-size:17px;color:#ffffff;transform:scaleX(0.9362);">ホーム</span>
<span class="t u" style="left:214.00px;top:13.60px;font-size:17px;color:#ffffff;transform:scaleX(1.0294);">挿入</span>
<span class="t u" style="left:297.00px;top:13.60px;font-size:17px;color:#ffffff;transform:scaleX(1.0606);">描画</span>
<span class="t u" style="left:379.07px;top:13.60px;font-size:17px;color:#ffffff;transform:scaleX(0.9291);">ページ レイアウト</span>
<span class="t u" style="left:545.00px;top:13.60px;font-size:17px;color:#ffffff;transform:scaleX(1.0588);">数式</span>
<span class="t u" style="left:627.05px;top:13.60px;font-size:17px;color:#217346;transform:scaleX(0.9457);">データ</span>
<span class="t u" style="left:717.00px;top:13.60px;font-size:17px;color:#ffffff;transform:scaleX(1.0909);">校閲</span>
<span class="t u" style="left:798.91px;top:13.60px;font-size:17px;color:#ffffff;transform:scaleX(1.0938);">表示</span>
<span class="t u" style="left:882.44px;top:13.60px;font-size:17px;color:#ffffff;transform:scaleX(1.0606);">開発</span>
<span class="t u" style="left:965.09px;top:13.60px;font-size:17px;color:#ffffff;transform:scaleX(0.9062);">ヘルプ</span>
<span class="t u" style="left:1056.50px;top:13.60px;font-size:17px;color:#ffffff;transform:scaleX(1.0579);">JUST PDF 5</span>
<span class="t u" style="left:1241.55px;top:13.60px;font-size:17px;color:#ffffff;transform:scaleX(0.9462);">何をしますか</span>
<span class="t u" style="left:28.03px;top:120.80px;font-size:16px;color:#262626;transform:scaleX(0.9707);">データの</span>
<span class="t u" style="left:31.30px;top:143.80px;font-size:16px;color:#262626;transform:scaleX(1.1031);">取得</span>
<span class="t u" style="left:153.00px;top:66.60px;font-size:16px;color:#262626;transform:scaleX(1.0093);">テキストまたは CSV から</span>
<span class="t u" style="left:154.00px;top:112.60px;font-size:16px;color:#262626;transform:scaleX(1.0769);">Web から</span>
<span class="t u" style="left:153.00px;top:158.60px;font-size:16px;color:#262626;transform:scaleX(0.9939);">テーブルまたは範囲から</span>
<span class="t u" style="left:405.96px;top:66.60px;font-size:16px;color:#262626;transform:scaleX(1.0368);">最近使ったソース</span>
<span class="t u" style="left:405.88px;top:112.60px;font-size:16px;color:#262626;transform:scaleX(1.1154);">既存の接続</span>
<span class="t u" style="left:213.98px;top:210.80px;font-size:16px;color:#262626;transform:scaleX(1.0219);">データの取得と変換</span>
<span class="t u" style="left:614.49px;top:134.00px;font-size:16px;color:#b4b4b4;transform:scaleX(1.0119);">すべて</span>
<span class="t u" style="left:608.90px;top:156.90px;font-size:16px;color:#b4b4b4;transform:scaleX(1.0968);">更新</span>
<span class="t u" style="left:735.56px;top:69.60px;font-size:16px;color:#262626;transform:scaleX(0.9375);">クエリと接続</span>
<span class="t u" style="left:735.55px;top:118.60px;font-size:16px;color:#b4b4b4;transform:scaleX(0.9493);">プロパティ</span>
<span class="t u" style="left:733.50px;top:168.00px;font-size:16px;color:#b4b4b4;">リンクの編集</span>
<span class="t u" style="left:676.56px;top:210.80px;font-size:16px;color:#262626;transform:scaleX(0.9432);">クエリと接続</span>
<span class="t u" style="left:959.97px;top:121.30px;font-size:16px;color:#262626;transform:scaleX(1.0323);">並べ替え</span>
<span class="t u" style="left:1039.58px;top:121.30px;font-size:16px;color:#262626;transform:scaleX(0.9191);">フィルター</span>
<span class="t u" style="left:1167.62px;top:69.70px;font-size:16px;color:#b4b4b4;transform:scaleX(0.8805);">クリア</span>
<span class="t u" style="left:1168.50px;top:118.70px;font-size:16px;color:#b4b4b4;transform:scaleX(1.1170);">再適用</span>
<span class="t u" style="left:1168.50px;top:168.00px;font-size:16px;color:#262626;transform:scaleX(1.1016);">詳細設定</span>
<span class="t u" style="left:1003.65px;top:210.80px;font-size:16px;color:#262626;transform:scaleX(0.9503);">並べ替えとフィルター</span>
<span class="t u" style="left:1305.93px;top:120.90px;font-size:16px;color:#262626;transform:scaleX(1.0724);">区切り位置</span>
<span class="t u" style="left:1385.03px;top:210.80px;font-size:16px;color:#262626;transform:scaleX(0.9677);">データ ツール</span>
<span class="t u" style="left:1604.00px;top:120.80px;font-size:16px;color:#262626;transform:scaleX(1.2273);">What-If 分析</span>
<span class="t u" style="left:1738.45px;top:120.80px;font-size:16px;color:#262626;transform:scaleX(1.1467);">予測</span>
<span class="t u" style="left:1734.98px;top:143.50px;font-size:16px;color:#262626;transform:scaleX(1.0195);">シート</span>
<span class="t u" style="left:1678.56px;top:210.80px;font-size:16px;color:#262626;transform:scaleX(1.1433);">予測</span>
<span class="t u" style="left:1836.44px;top:113.80px;font-size:16px;color:#262626;transform:scaleX(0.9630);">アウトラ</span>
<span class="t u" style="left:1840.53px;top:137.20px;font-size:16px;color:#262626;transform:scaleX(0.9667);">イン</span>
<span class="t u" style="left:1983.97px;top:66.70px;font-size:16px;color:#262626;transform:scaleX(1.0263);">データ分析</span>
<span class="t u" style="left:1983.99px;top:112.80px;font-size:16px;color:#262626;transform:scaleX(1.0105);">ソルバー</span>
<span class="t u" style="left:1990.60px;top:210.80px;font-size:16px;color:#262626;transform:scaleX(1.1031);">分析</span>
<span class="t c" style="left:13.55px;top:308.65px;font-size:22px;color:#333;transform:scaleX(1.0727);">E8</span>
<span class="t s" style="left:330.00px;top:306.10px;font-size:22px;color:#666;transform:scaleX(1.0222);">fx</span>
<span class="t c" style="left:62.70px;top:357.90px;font-size:22px;color:#262626;transform:scaleX(0.9700);">A</span>
<span class="t c" style="left:138.22px;top:357.90px;font-size:22px;color:#262626;transform:scaleX(0.9700);">B</span>
<span class="t c" style="left:238.71px;top:357.90px;font-size:22px;color:#262626;transform:scaleX(0.9700);">C</span>
<span class="t c" style="left:337.74px;top:357.90px;font-size:22px;color:#262626;transform:scaleX(0.9700);">D</span>
<span class="t c" style="left:438.71px;top:357.90px;font-size:22px;color:#217346;transform:scaleX(0.9700);">E</span>
<span class="t c" style="left:538.71px;top:357.90px;font-size:22px;color:#262626;transform:scaleX(0.9700);">F</span>
<span class="t c" style="left:638.71px;top:357.90px;font-size:22px;color:#262626;transform:scaleX(0.9700);">G</span>
<span class="t c" style="left:737.74px;top:357.90px;font-size:22px;color:#262626;transform:scaleX(0.9700);">H</span>
<span class="t c" style="left:842.59px;top:357.90px;font-size:22px;color:#262626;transform:scaleX(0.9700);">I</span>
<span class="t c" style="left:940.65px;top:357.90px;font-size:22px;color:#262626;transform:scaleX(0.9700);">J</span>
<span class="t c" style="left:1037.74px;top:357.90px;font-size:22px;color:#262626;transform:scaleX(0.9700);">K</span>
<span class="t c" style="left:1139.19px;top:357.90px;font-size:22px;color:#262626;transform:scaleX(0.9700);">L</span>
<span class="t c" style="left:1237.26px;top:357.90px;font-size:22px;color:#262626;transform:scaleX(0.9700);">M</span>
<span class="t c" style="left:1337.74px;top:357.90px;font-size:22px;color:#262626;transform:scaleX(0.9700);">N</span>
<span class="t c" style="left:1437.74px;top:357.90px;font-size:22px;color:#262626;transform:scaleX(0.9700);">O</span>
<span class="t c" style="left:1538.22px;top:357.90px;font-size:22px;color:#262626;transform:scaleX(0.9700);">P</span>
<span class="t c" style="left:1637.74px;top:357.90px;font-size:22px;color:#262626;transform:scaleX(0.9700);">Q</span>
<span class="t c" style="left:1738.22px;top:357.90px;font-size:22px;color:#262626;transform:scaleX(0.9700);">R</span>
<span class="t c" style="left:1839.19px;top:357.90px;font-size:22px;color:#262626;transform:scaleX(0.9700);">S</span>
<span class="t c" style="left:1939.19px;top:357.90px;font-size:22px;color:#262626;transform:scaleX(0.9700);">T</span>
<span class="t c" style="left:2037.74px;top:357.90px;font-size:22px;color:#262626;transform:scaleX(0.9700);">U</span>
<span class="t c" style="left:2139.68px;top:357.90px;font-size:22px;color:#262626;transform:scaleX(0.9700);">V</span>
<span class="t c" style="left:14.63px;top:392.30px;font-size:22px;color:#262626;transform:scaleX(0.9800);">1</span>
<span class="t c" style="left:15.12px;top:427.30px;font-size:22px;color:#262626;transform:scaleX(0.9800);">2</span>
<span class="t c" style="left:15.12px;top:462.30px;font-size:22px;color:#262626;transform:scaleX(0.9800);">3</span>
<span class="t c" style="left:15.61px;top:497.30px;font-size:22px;color:#262626;transform:scaleX(0.9800);">4</span>
<span class="t c" style="left:15.12px;top:532.30px;font-size:22px;color:#262626;transform:scaleX(0.9800);">5</span>
<span class="t c" style="left:15.12px;top:567.30px;font-size:22px;color:#262626;transform:scaleX(0.9800);">6</span>
<span class="t c" style="left:15.12px;top:602.30px;font-size:22px;color:#262626;transform:scaleX(0.9800);">7</span>
<span class="t c" style="left:15.12px;top:637.30px;font-size:22px;color:#217346;transform:scaleX(0.9800);">8</span>
<span class="t c" style="left:15.12px;top:672.30px;font-size:22px;color:#262626;transform:scaleX(0.9800);">9</span>
<span class="t c" style="left:8.75px;top:707.30px;font-size:22px;color:#262626;transform:scaleX(0.9800);">10</span>
<span class="t c" style="left:9.24px;top:742.30px;font-size:22px;color:#262626;transform:scaleX(0.9800);">11</span>
<span class="t c" style="left:8.75px;top:777.30px;font-size:22px;color:#262626;transform:scaleX(0.9800);">12</span>
<span class="t c" style="left:8.75px;top:812.30px;font-size:22px;color:#262626;transform:scaleX(0.9800);">13</span>
<span class="t c" style="left:8.75px;top:847.30px;font-size:22px;color:#262626;transform:scaleX(0.9800);">14</span>
<span class="t c" style="left:8.75px;top:882.30px;font-size:22px;color:#262626;transform:scaleX(0.9800);">15</span>
<span class="t c" style="left:256.69px;top:461.90px;font-size:22px;color:#000;transform:scaleX(0.9800);">161</span>
<span class="t c" style="left:356.69px;top:461.90px;font-size:22px;color:#000;transform:scaleX(0.9800);">151</span>
<span class="t c" style="left:456.69px;top:461.90px;font-size:22px;color:#000;transform:scaleX(0.9800);">166</span>
<span class="t c" style="left:556.69px;top:461.90px;font-size:22px;color:#000;transform:scaleX(0.9800);">177</span>
<span class="t c" style="left:656.69px;top:461.90px;font-size:22px;color:#000;transform:scaleX(0.9800);">160</span>
<span class="t c" style="left:756.69px;top:461.90px;font-size:22px;color:#000;transform:scaleX(0.9800);">167</span>
<span class="t c" style="left:856.69px;top:461.90px;font-size:22px;color:#000;transform:scaleX(0.9800);">178</span>
<span class="t c" style="left:956.69px;top:461.90px;font-size:22px;color:#000;transform:scaleX(0.9800);">159</span>
<span class="t c" style="left:1056.69px;top:461.90px;font-size:22px;color:#000;transform:scaleX(0.9800);">157</span>
<span class="t c" style="left:1156.69px;top:461.90px;font-size:22px;color:#000;transform:scaleX(0.9800);">168</span>
<span class="t c" style="left:1256.69px;top:461.90px;font-size:22px;color:#000;transform:scaleX(0.9800);">164</span>
<span class="t c" style="left:1356.69px;top:461.90px;font-size:22px;color:#000;transform:scaleX(0.9800);">175</span>
<span class="t c" style="left:1456.69px;top:461.90px;font-size:22px;color:#000;transform:scaleX(0.9800);">165</span>
<span class="t c" style="left:1556.69px;top:461.90px;font-size:22px;color:#000;transform:scaleX(0.9800);">174</span>
<span class="t c" style="left:1656.69px;top:461.90px;font-size:22px;color:#000;transform:scaleX(0.9800);">167</span>
<span class="t c" style="left:1756.69px;top:461.90px;font-size:22px;color:#000;transform:scaleX(0.9800);">173</span>
<span class="t c" style="left:1856.69px;top:461.90px;font-size:22px;color:#000;transform:scaleX(0.9800);">152</span>
<span class="t c" style="left:1956.69px;top:461.90px;font-size:22px;color:#000;transform:scaleX(0.9800);">172</span>
<span class="t c" style="left:2056.69px;top:461.90px;font-size:22px;color:#000;transform:scaleX(0.9800);">158</span>
<span class="t c" style="left:2156.69px;top:461.90px;font-size:22px;color:#000;transform:scaleX(0.9800);">163</span>
<span class="t c" style="left:124.66px;top:532.80px;font-size:20.5px;color:#000;transform:scaleX(1.0211);">区間</span>
<div class="a" style="left:96px;top:462.70px;width:99px;height:30px;overflow:hidden"><span class="t c" style="left:3.47px;top:0;font-size:20.5px;color:#000;transform:scaleX(1.0300);">身長（cm）</span></div>
<span class="t c" style="left:156.69px;top:567.00px;font-size:22px;color:#000;transform:scaleX(0.9800);">158</span>
<span class="t c" style="left:156.69px;top:602.00px;font-size:22px;color:#000;transform:scaleX(0.9800);">161</span>
<span class="t c" style="left:156.69px;top:637.00px;font-size:22px;color:#000;transform:scaleX(0.9800);">164</span>
<span class="t c" style="left:156.69px;top:672.00px;font-size:22px;color:#000;transform:scaleX(0.9800);">167</span>
<span class="t c" style="left:156.69px;top:707.00px;font-size:22px;color:#000;transform:scaleX(0.9800);">170</span>
<span class="t c" style="left:156.69px;top:742.00px;font-size:22px;color:#000;transform:scaleX(0.9800);">173</span>
<span class="t c" style="left:156.69px;top:777.00px;font-size:22px;color:#000;transform:scaleX(0.9800);">176</span>
<span class="t c" style="left:156.69px;top:812.00px;font-size:22px;color:#000;transform:scaleX(0.9800);">179</span>
<span class="t c" style="left:156.69px;top:847.00px;font-size:22px;color:#000;transform:scaleX(0.9800);">182</span>
<span class="t d" style="left:684.00px;top:546.50px;font-size:15.6px;color:#000;transform:scaleX(0.9907);">データ分析</span>
<span class="t d" style="left:693.40px;top:588.10px;font-size:15.6px;color:#000;transform:scaleX(1.0990);">分析ツール(<u>A</u>)</span>
<span class="t d" style="left:698.40px;top:621.10px;font-size:15.6px;color:#000;transform:scaleX(1.1399);">分散分析:&nbsp; 一元配置</span>
<span class="t d" style="left:698.40px;top:644.10px;font-size:15.6px;color:#000;transform:scaleX(1.0921);">分散分析:&nbsp; 繰り返しのある二元配置</span>
<span class="t d" style="left:698.40px;top:667.10px;font-size:15.6px;color:#000;transform:scaleX(1.0900);">分散分析:&nbsp; 繰り返しのない二元配置</span>
<span class="t d" style="left:698.40px;top:690.10px;font-size:15.6px;color:#000;transform:scaleX(1.1700);">相関</span>
<span class="t d" style="left:698.40px;top:713.10px;font-size:15.6px;color:#000;transform:scaleX(1.1191);">共分散</span>
<span class="t d" style="left:698.40px;top:736.10px;font-size:15.6px;color:#000;transform:scaleX(1.1462);">基本統計量</span>
<span class="t d" style="left:698.40px;top:759.10px;font-size:15.6px;color:#000;transform:scaleX(1.1452);">指数平滑</span>
<span class="t d" style="left:697.28px;top:782.10px;font-size:15.6px;color:#000;transform:scaleX(1.1171);">F 検定:&nbsp;&nbsp; 2 標本を使った分散の検定</span>
<span class="t d" style="left:697.39px;top:805.10px;font-size:15.6px;color:#000;transform:scaleX(1.0070);">フーリエ解析</span>
<span class="t d" style="left:696.41px;top:828.10px;font-size:15.6px;color:#fff;transform:scaleX(0.9949);">ヒストグラム</span>
<span class="t d" style="left:1338.00px;top:602.00px;font-size:15.6px;color:#000;transform:scaleX(1.1304);">OK</span>
<span class="t d" style="left:1314.99px;top:650.20px;font-size:15.6px;color:#000;transform:scaleX(1.0072);">キャンセル</span>
<span class="t d" style="left:1312.88px;top:705.20px;font-size:15.6px;color:#000;transform:scaleX(1.1200);">ヘルプ(<u>H</u>)</span>
<span class="t d" style="left:1329.00px;top:547.80px;font-size:15.6px;color:#000;">?</span>
</body></html>
